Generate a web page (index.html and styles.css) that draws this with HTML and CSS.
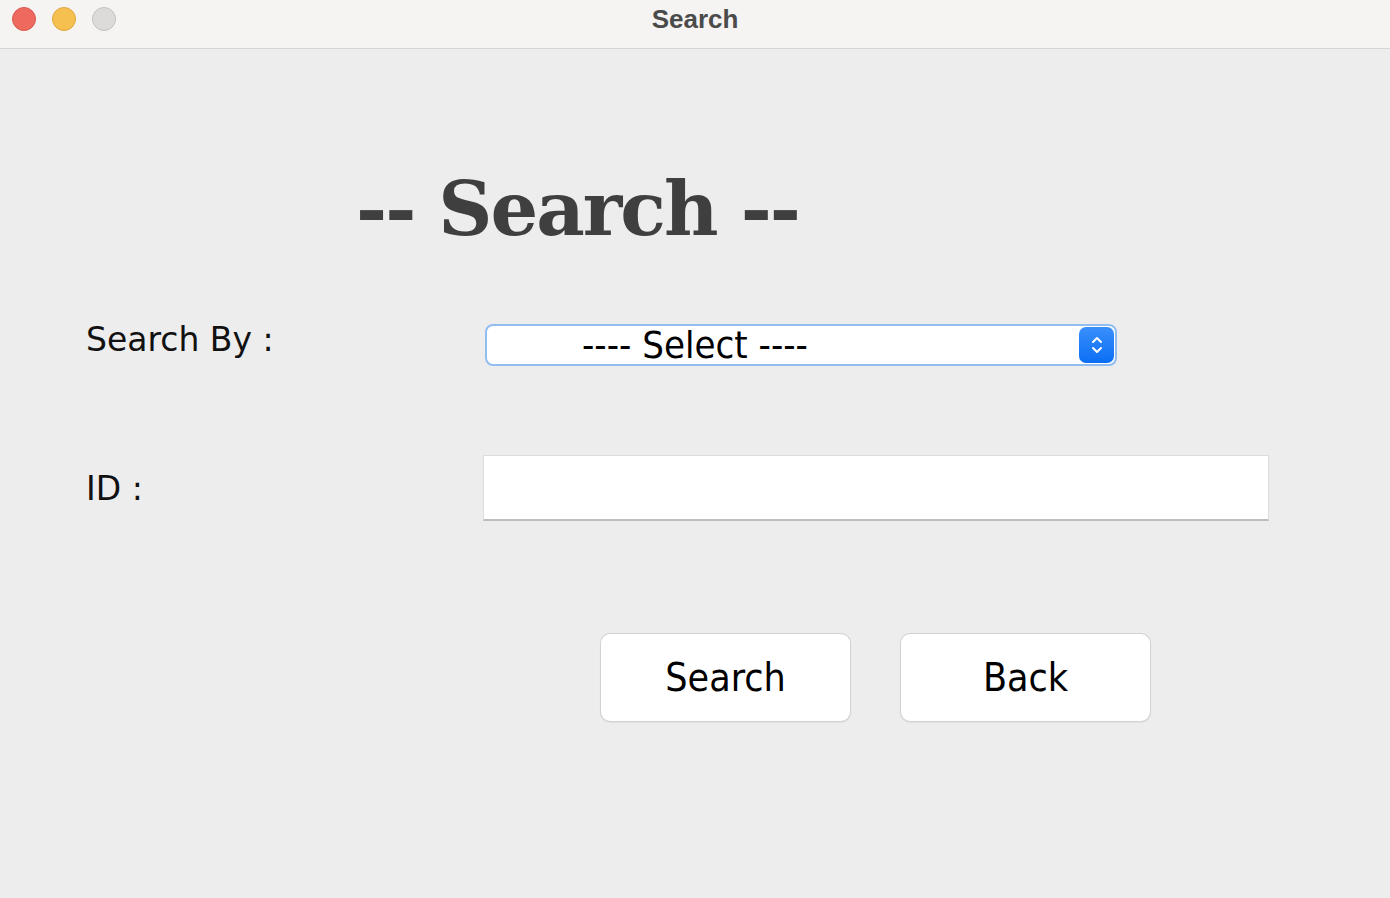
FILE: index.html
```html
<!DOCTYPE html>
<html>
<head>
<meta charset="utf-8">
<link rel="stylesheet" href="styles.css">
</head>
<body>
<div class="window">
  <header class="titlebar">
    <div class="lights">
      <span class="light red"></span>
      <span class="light yellow"></span>
      <span class="light gray"></span>
    </div>
    <div class="wtitle">Search</div>
  </header>
  <main class="content">
    <h1 class="heading">-- Search --</h1>
    <div class="row row-select">
      <label class="label">Search By :</label>
      <div class="select">
        <span class="select-text">---- Select ----</span>
        <span class="stepper">
          <svg width="16" height="26" viewBox="0 0 16 26"><path d="M4 10 L8 6 L12 10 M4 16 L8 20 L12 16" fill="none" stroke="#fff" stroke-width="2" stroke-linecap="round" stroke-linejoin="round"/></svg>
        </span>
      </div>
    </div>
    <div class="row row-id">
      <label class="label">ID :</label>
      <div class="field"></div>
    </div>
    <div class="buttons">
      <button class="btn">Search</button>
      <button class="btn">Back</button>
    </div>
  </main>
</div>
</body>
</html>
```
FILE: styles.css
```css
html, body { margin: 0; padding: 0; }
body { width: 1390px; height: 898px; overflow: hidden; background: #ededed; }
.window { display: flex; flex-direction: column; height: 898px; }
.titlebar {
  height: 48px; background: #f5f4f3; border-bottom: 1px solid #d6d5d4;
  position: relative; display: flex; align-items: center; justify-content: center;
  flex: none;
}
.lights { position: absolute; left: 12px; top: 7px; display: flex; gap: 16px; }
.light { width: 24px; height: 24px; border-radius: 50%; box-sizing: border-box; }
.red { background: #ee6a5f; border: 1px solid #d9584e; }
.yellow { background: #f5c04f; border: 1px solid #dea73c; }
.gray { background: #dcdbd9; border: 1px solid #c4c3c1; }
.wtitle { font-family: "Liberation Sans", Arial, sans-serif; font-weight: bold; font-size: 26px; color: #4b4b4b; margin-top: -10px; margin-left: 0; }
.content { flex: 1; display: flex; flex-direction: column; }
.heading {
  margin: 110px 0 0 356px; font-family: "DejaVu Serif", serif; font-weight: bold;
  font-size: 75px; line-height: 100px; color: #3f3f3f; letter-spacing: -2px;
}
.row { display: flex; align-items: center; }
.label { width: 397px; padding-left: 86px; box-sizing: content-box; font-family: "DejaVu Sans", sans-serif; font-size: 33px; color: #111; }
.row-select { margin-top: 61px; }
.row-select .label { margin-bottom: 10px; width: 399px; }
.select {
  width: 632px; height: 42px; box-sizing: border-box; background: #fff;
  border: 2px solid #92bdf0; border-radius: 8px; display: flex; align-items: center; position: relative;
}
.select-text { font-family: "DejaVu Sans Condensed", sans-serif; font-size: 38px; color: #000; margin-left: 95px; }
.stepper {
  position: absolute; right: 1px; top: 1px; width: 35px; height: 36px; border-radius: 7px;
  background: linear-gradient(#3a8ffb, #0a6ef5); display: flex; align-items: center; justify-content: center;
}
.field { width: 786px; height: 66px; box-sizing: border-box; background: #fff; border: 1px solid #dcdcdc; border-bottom: 2px solid #bdbdbd; }
.row-id { margin-top: 86px; }
.buttons { display: flex; gap: 51px; margin: 113px 0 0 601px; }
.btn {
  width: 249px; height: 87px; background: #fff; border: none; border-radius: 9px;
  box-shadow: 0 0 0 1px #d2d2d2, 0 1px 2px rgba(0,0,0,.15);
  font-family: "DejaVu Sans Condensed", sans-serif; font-size: 39px; color: #000; padding: 0;
}
```
